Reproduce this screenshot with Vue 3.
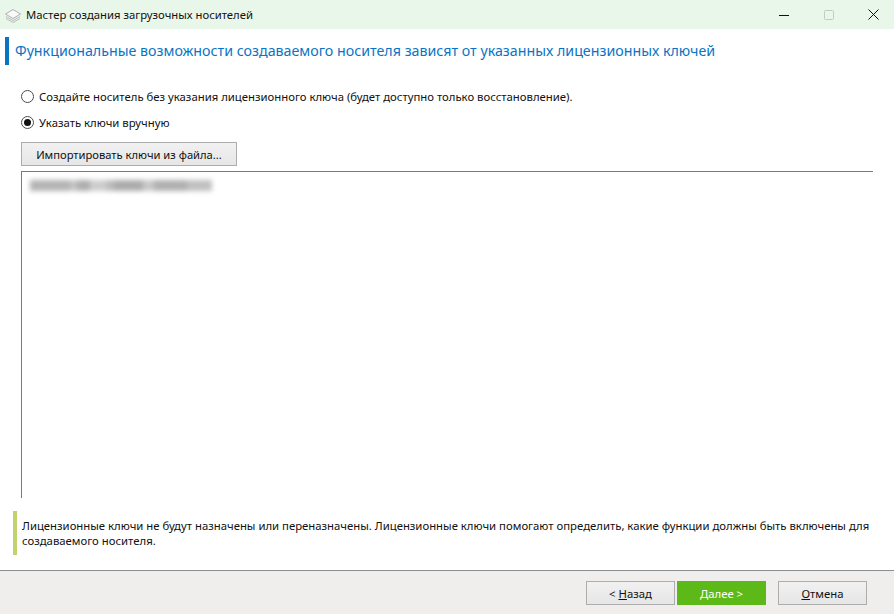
<script setup>
const title = 'Мастер создания загрузочных носителей'
const heading = 'Функциональные возможности создаваемого носителя зависят от указанных лицензионных ключей'
</script>

<template>
  <div class="window">
    <header class="titlebar">
      <svg class="logo" width="18" height="18" viewBox="0 0 18 18" fill="none">
        <path d="M2 10.500 9 14.500l7-4M2 12.500 9 16.500l7-4" stroke="#b9bdba" stroke-width="1"/>
        <path d="M9 3.500 1.500 8 9 12.500 16.500 8z" fill="#f8f9f8" stroke="#aeb2af" stroke-width="1"/>
      </svg>
      <span class="title">{{ title }}</span>
      <div class="controls">
        <span class="ctl"><svg width="10" height="10" viewBox="0 0 10 10"><path d="M0 5.500h10" stroke="#111" stroke-width="1"/></svg></span>
        <span class="ctl"><svg width="10" height="10" viewBox="0 0 10 10"><rect x=".5" y=".5" width="9" height="9" rx="1" fill="none" stroke="#c3c9c4"/></svg></span>
        <span class="ctl"><svg width="11" height="11" viewBox="0 0 11 11"><path d="M.5.500l10 10M10.500.500l-10 10" stroke="#111" stroke-width="1"/></svg></span>
      </div>
    </header>

    <main class="content">
      <h1 class="heading">{{ heading }}</h1>

      <div class="options">
        <label class="radio">
          <span class="dot"></span>
          <span>Создайте носитель без указания лицензионного ключа (будет доступно только восстановление).</span>
        </label>
        <label class="radio">
          <span class="dot checked"></span>
          <span>Указать ключи вручную</span>
        </label>
      </div>

      <button class="btn import">Импортировать ключи из файла...</button>

      <div class="keys">
        <div class="blurred"></div>
      </div>

      <p class="note">Лицензионные ключи не будут назначены или переназначены. Лицензионные ключи помогают определить, какие функции должны быть включены для создаваемого носителя.</p>
    </main>

    <footer class="footer">
      <button class="btn"><span>&lt; <u>Н</u>азад</span></button>
      <button class="btn primary"><span><u>Д</u>алее &gt;</span></button>
      <button class="btn cancel"><span><u>О</u>тмена</span></button>
    </footer>
  </div>
</template>

<style>
html, body { margin: 0; background: #fff; overflow: hidden; }
</style>

<style scoped>
.window {
  width: 894px;
  height: 614px;
  display: flex;
  flex-direction: column;
  font-family: "Noto Sans", "Open Sans", sans-serif;
  font-size: 11.33px;
  color: #111;
  background: #fff;
  overflow: hidden;
}
.titlebar {
  height: 29px;
  flex: none;
  display: flex;
  align-items: center;
  padding-left: 4px;
  background: #e9f6ea;
}
.logo { margin-right: 4px; }
.title { font-size: 11.3px; color: #111; }
.controls { margin-left: auto; margin-right: -2px; display: flex; }
.ctl {
  width: 45px;
  height: 29px;
  display: flex;
  align-items: center;
  justify-content: center;
}
.content {
  flex: 1;
  display: flex;
  flex-direction: column;
  min-height: 0;
  padding: 8px 21px 0 5px;
}
.heading {
  margin: 0;
  height: 28px;
  line-height: 27px;
  border-left: 4px solid #0a74c4;
  padding-left: 6px;
  font-size: 14.24px;
  font-weight: 400;
  color: #0a74c4;
  white-space: nowrap;
}
.options {
  display: flex;
  flex-direction: column;
  gap: 10px;
  padding: 23px 0 0 16px;
}
.radio {
  height: 16px;
  display: flex;
  align-items: center;
  gap: 5px;
  white-space: nowrap;
}
.dot {
  box-sizing: border-box;
  width: 13px;
  height: 13px;
  border: 1px solid #4d4d4d;
  border-radius: 50%;
  background: #fff;
  position: relative;
}
.dot.checked::after {
  content: "";
  position: absolute;
  inset: 2px;
  border-radius: 50%;
  background: #111;
}
.btn {
  box-sizing: border-box;
  width: 89px;
  height: 24px;
  padding: 0;
  border: 1px solid #adadad;
  background: linear-gradient(#f1f1f1, #e6e6e6);
  font: inherit;
  color: #111;
}
.import {
  width: 216px;
  margin: 12px 0 0 16px;
  flex: none;
  font-size: 11.2px;
}
.keys {
  flex: 1;
  margin: 5px 0 0 16px;
  border-top: 1px solid #7a7a7a;
  border-left: 1px solid #7a7a7a;
  min-height: 0;
}
.blurred {
  width: 182px;
  height: 11px;
  margin: 8px 0 0 8px;
  background: linear-gradient(90deg, #b4b4b4 0 22%, #c4c4c4 22% 26%, #aeaeae 26% 33%, #cdcdcd 33% 42%, #bcbcbc 42% 46%, #acacac 46% 62%, #c8c8c8 62% 68%, #b0b0b0 68% 86%, #c0c0c0 86% 100%);
  filter: blur(2.500px);
}
.note {
  margin: 13px 0 15px 8px;
  border-left: 4px solid #c2d26c;
  padding: 7px 0 6px 5px;
  height: 44px;
  box-sizing: border-box;
  line-height: 15px;
  width: 860px;
}
.footer {
  height: 44px;
  flex: none;
  box-sizing: border-box;
  border-top: 1px solid #8e8e8e;
  background: #efeeed;
  display: flex;
  align-items: flex-start;
  padding: 10px 0 0 586px;
  gap: 2px;
}
.primary {
  border-color: #5cb917;
  background: #5cb917;
  color: #fff;
}
.cancel { margin-left: 10px; }
</style>
